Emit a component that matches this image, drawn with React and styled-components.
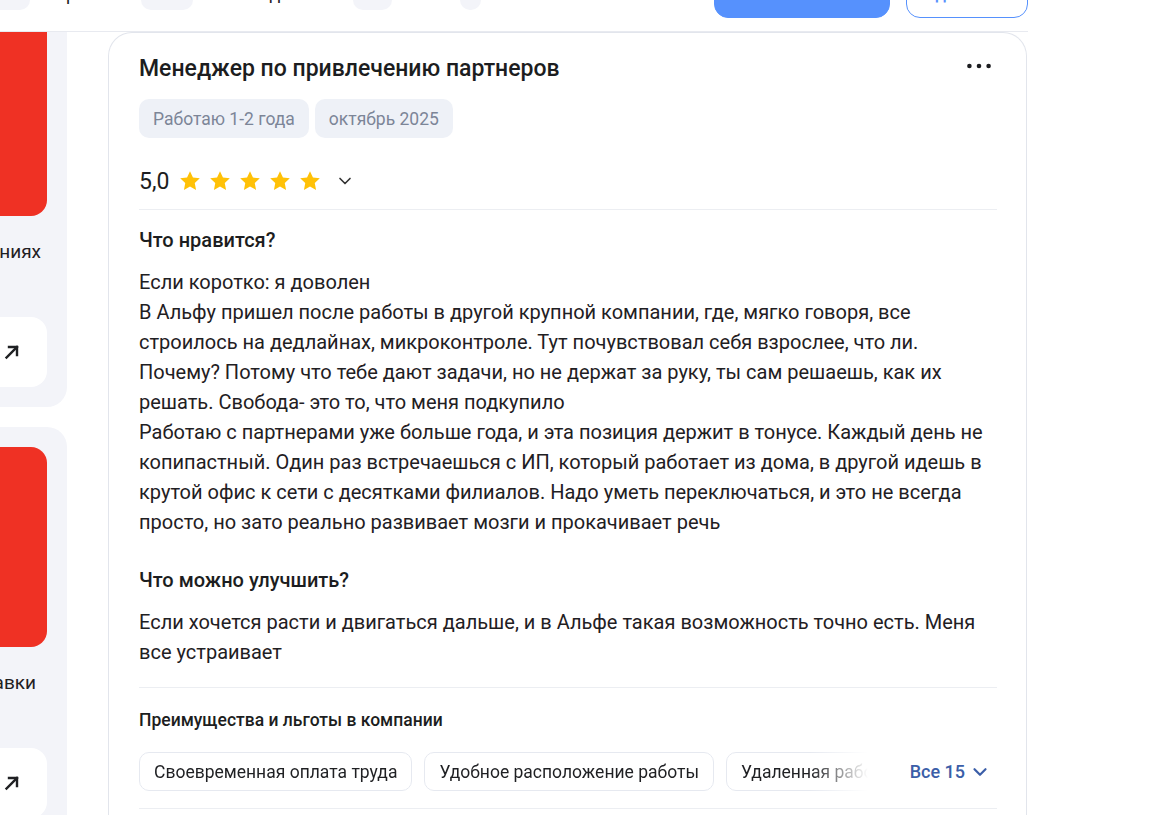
import React from "react";
import styled, { createGlobalStyle } from "styled-components";
import { ChevronDown } from "lucide-react";

const GlobalStyle = createGlobalStyle`
  html, body {
    margin: 0;
    padding: 0;
    background: #fff;
  }
  body {
    font-family: Roboto, "Noto Sans", Arial, sans-serif;
    color: #1f2023;
    overflow: hidden;
  }
  * { box-sizing: border-box; }
`;

const Page = styled.div`
  width: 1028px;
  height: 815px;
  overflow: hidden;
`;

/* top bar, scrolled so only its lower part shows */
const TopBar = styled.header`
  height: 32px;
  display: flex;
  align-items: flex-end;
  border-bottom: 1px solid #e8eaf0;
  overflow: hidden;
`;

const Tabs = styled.nav`
  width: 481px;
  flex-shrink: 0;
  display: flex;
  justify-content: flex-end;
  align-items: center;
  gap: 16px;
  margin-bottom: 21px;
  overflow: hidden;
`;

const Tab = styled.div`
  display: flex;
  align-items: center;
  gap: 12px;
  font-size: 18px;
  line-height: 24px;
  white-space: nowrap;
  color: #1f2023;
`;

const Count = styled.span`
  height: 32px;
  display: inline-flex;
  align-items: center;
  padding: 0 6px;
  border-radius: 10px;
  background: #f3f4f9;
  color: #8a90a0;
  font-size: 16px;
`;

const Actions = styled.div`
  margin-left: auto;
  display: flex;
  gap: 16px;
  margin-bottom: 13px;
`;

const Button = styled.button`
  height: 48px;
  width: ${(p) => p.$w}px;
  border-radius: 14px;
  font-family: inherit;
  font-size: 17px;
  font-weight: 500;
  border: 1px solid #5691fd;
  background: ${(p) => (p.$outline ? "#fff" : "#5691fd")};
  color: ${(p) => (p.$outline ? "#5691fd" : "#fff")};
`;

const Body = styled.div`
  display: grid;
  grid-template-columns: 67px minmax(0, 1fr);
  column-gap: 41px;
  height: 783px;
`;

/* left column, cut by the viewport on its left side */
const Side = styled.aside`
  display: flex;
  justify-content: flex-end;
  overflow: hidden;
`;

const SideStack = styled.div`
  width: 300px;
  flex-shrink: 0;
  margin-top: -36px;
  display: flex;
  flex-direction: column;
  gap: 20px;
`;

const PromoCard = styled.div`
  background: #f3f4f9;
  border-radius: 20px;
  padding: 20px;
`;

const PromoImage = styled.div`
  height: 200px;
  border-radius: 16px;
  background: #ef3124;
`;

const PromoCaption = styled.div`
  margin-top: 24px;
  padding-right: ${(p) => p.$inset}px;
  font-size: 19px;
  line-height: 24px;
  text-align: right;
  white-space: nowrap;
  color: #1f2023;
`;

const PromoLink = styled.div`
  margin-top: 53px;
  height: 70px;
  border-radius: 16px;
  background: #fff;
  display: flex;
  align-items: center;
  justify-content: flex-end;
  padding-right: 27px;
`;

const Card = styled.article`
  min-width: 0;
  margin-right: 1px;
  border: 1px solid #e2e5ec;
  border-bottom: none;
  border-radius: 24px 24px 0 0;
  padding: 21px 29px 0 30px;
`;

const TitleRow = styled.div`
  display: flex;
  justify-content: space-between;
  align-items: center;
`;

const Title = styled.h2`
  margin: 0;
  font-size: 23px;
  line-height: 30px;
  font-weight: 500;
  color: #1c1d20;
`;

const MoreButton = styled.div`
  margin-right: 6px;
  margin-bottom: 6px;
  display: flex;
`;

const TagRow = styled.div`
  margin-top: 15px;
  display: flex;
  gap: 6px;
`;

const Tag = styled.span`
  height: 39px;
  display: inline-flex;
  align-items: center;
  padding: 0 14px;
  border-radius: 10px;
  background: #eef1f7;
  color: #7c8597;
  font-size: 17.5px;
`;

const RatingRow = styled.div`
  margin-top: 27px;
  height: 32px;
  display: flex;
  align-items: center;
`;

const Score = styled.span`
  font-size: 23px;
  color: #1c1d20;
`;

const Stars = styled.div`
  display: flex;
  gap: 6px;
  margin-left: 9px;
  margin-right: 13px;
`;

const Divider = styled.div`
  height: 1px;
  background: #eceef2;
  margin-top: ${(p) => p.$top}px;
`;

const SectionTitle = styled.h3`
  margin: ${(p) => p.$top}px 0 0;
  font-size: 20px;
  line-height: 24px;
  font-weight: 500;
  color: #1c1d20;
`;

const Text = styled.p`
  margin: 15px 0 0;
  font-size: 20px;
  line-height: 30px;
  white-space: pre-line;
  color: #1f2023;
`;

const BenefitsTitle = styled.h4`
  margin: 21px 0 0;
  font-size: 17.5px;
  line-height: 22px;
  font-weight: 500;
  color: #1c1d20;
`;

const ChipsRow = styled.div`
  margin-top: 21px;
  display: flex;
  align-items: center;
`;

const Chips = styled.div`
  flex: 1;
  min-width: 0;
  display: flex;
  gap: 12px;
  overflow: hidden;
  mask-image: linear-gradient(to right, #000 92%, transparent 100%);
`;

const Chip = styled.span`
  flex-shrink: 0;
  height: 39px;
  display: inline-flex;
  align-items: center;
  padding: 0 14px;
  border: 1px solid #e6e9f0;
  border-radius: 10px;
  font-size: 17.5px;
  white-space: nowrap;
  color: #1f2023;
`;

const ShowAll = styled.button`
  margin-left: 42px;
  margin-right: 6px;
  display: flex;
  align-items: center;
  gap: 4px;
  padding: 0;
  border: none;
  background: none;
  font-family: inherit;
  font-size: 18px;
  font-weight: 500;
  color: #3b5ea8;
`;

const Star = () => (
  <svg width="24" height="24" viewBox="0 0 24 24">
    <path
      d="M12 2.2l2.95 6.3 6.85.85-5.05 4.75 1.3 6.8L12 17.55 5.95 20.9l1.3-6.8L2.2 9.35l6.85-.85z"
      fill="#ffc107"
    />
  </svg>
);

const Dots = () => (
  <svg width="24" height="6" viewBox="0 0 24 6">
    <circle cx="2.4" cy="3" r="2.3" fill="#1c1d20" />
    <circle cx="12" cy="3" r="2.3" fill="#1c1d20" />
    <circle cx="21.6" cy="3" r="2.3" fill="#1c1d20" />
  </svg>
);

const Arrow = () => (
  <svg width="16" height="16" viewBox="0 0 16 16" fill="none" stroke="#1f2023" strokeWidth="2.4" strokeLinecap="square">
    <path d="M2.5 13.5L13 3" />
    <path d="M5 3h8v8" />
  </svg>
);

const liked = `Если коротко: я доволен
В Альфу пришел после работы в другой крупной компании, где, мягко говоря, все строилось на дедлайнах, микроконтроле. Тут почувствовал себя взрослее, что ли. Почему? Потому что тебе дают задачи, но не держат за руку, ты сам решаешь, как их решать. Свобода- это то, что меня подкупило
Работаю с партнерами уже больше года, и эта позиция держит в тонусе. Каждый день не копипастный. Один раз встречаешься с ИП, который работает из дома, в другой идешь в крутой офис к сети с десятками филиалов. Надо уметь переключаться, и это не всегда просто, но зато реально развивает мозги и прокачивает речь`;

const improve = `Если хочется расти и двигаться дальше, и в Альфе такая возможность точно есть. Меня все устраивает`;

const tabs = [
  { label: "Отзывы", count: "1 121" },
  { label: "Зарплаты", count: "2 305" },
  { label: "Собеседования", count: "146" },
  { label: "Блог", count: "5" },
];

const promos = [
  { caption: "Истории о подразделениях", inset: 6 },
  { caption: "Стажировки и надбавки", inset: 11 },
];

const benefits = [
  "Своевременная оплата труда",
  "Удобное расположение работы",
  "Удаленная работа",
  "ДМС",
];

const App = () => {
  return (
    <Page>
      <GlobalStyle />
      <TopBar>
        <Tabs>
          {tabs.map((t) => (
            <Tab key={t.label}>
              {t.label}
              <Count>{t.count}</Count>
            </Tab>
          ))}
        </Tabs>
        <Actions>
          <Button $w={176}>Оставить отзыв</Button>
          <Button $w={122} $outline>
            Подписаться
          </Button>
        </Actions>
      </TopBar>
      <Body>
        <Side>
          <SideStack>
            {promos.map((p) => (
              <PromoCard key={p.caption}>
                <PromoImage />
                <PromoCaption $inset={p.inset}>{p.caption}</PromoCaption>
                <PromoLink>
                  <Arrow />
                </PromoLink>
              </PromoCard>
            ))}
          </SideStack>
        </Side>
        <Card>
          <TitleRow>
            <Title>Менеджер по привлечению партнеров</Title>
            <MoreButton>
              <Dots />
            </MoreButton>
          </TitleRow>
          <TagRow>
            <Tag>Работаю 1-2 года</Tag>
            <Tag>октябрь 2025</Tag>
          </TagRow>
          <RatingRow>
            <Score>5,0</Score>
            <Stars>
              {[0, 1, 2, 3, 4].map((i) => (
                <Star key={i} />
              ))}
            </Stars>
            <ChevronDown size={20} color="#333" strokeWidth={2} />
          </RatingRow>
          <Divider $top={12} />
          <SectionTitle $top={18}>Что нравится?</SectionTitle>
          <Text>{liked}</Text>
          <SectionTitle $top={31}>Что можно улучшить?</SectionTitle>
          <Text>{improve}</Text>
          <Divider $top={20} />
          <BenefitsTitle>Преимущества и льготы в компании</BenefitsTitle>
          <ChipsRow>
            <Chips>
              {benefits.map((b) => (
                <Chip key={b}>{b}</Chip>
              ))}
            </Chips>
            <ShowAll>
              Все 15
              <ChevronDown size={22} strokeWidth={2.4} />
            </ShowAll>
          </ChipsRow>
          <Divider $top={17} />
        </Card>
      </Body>
    </Page>
  );
};

export default App;
